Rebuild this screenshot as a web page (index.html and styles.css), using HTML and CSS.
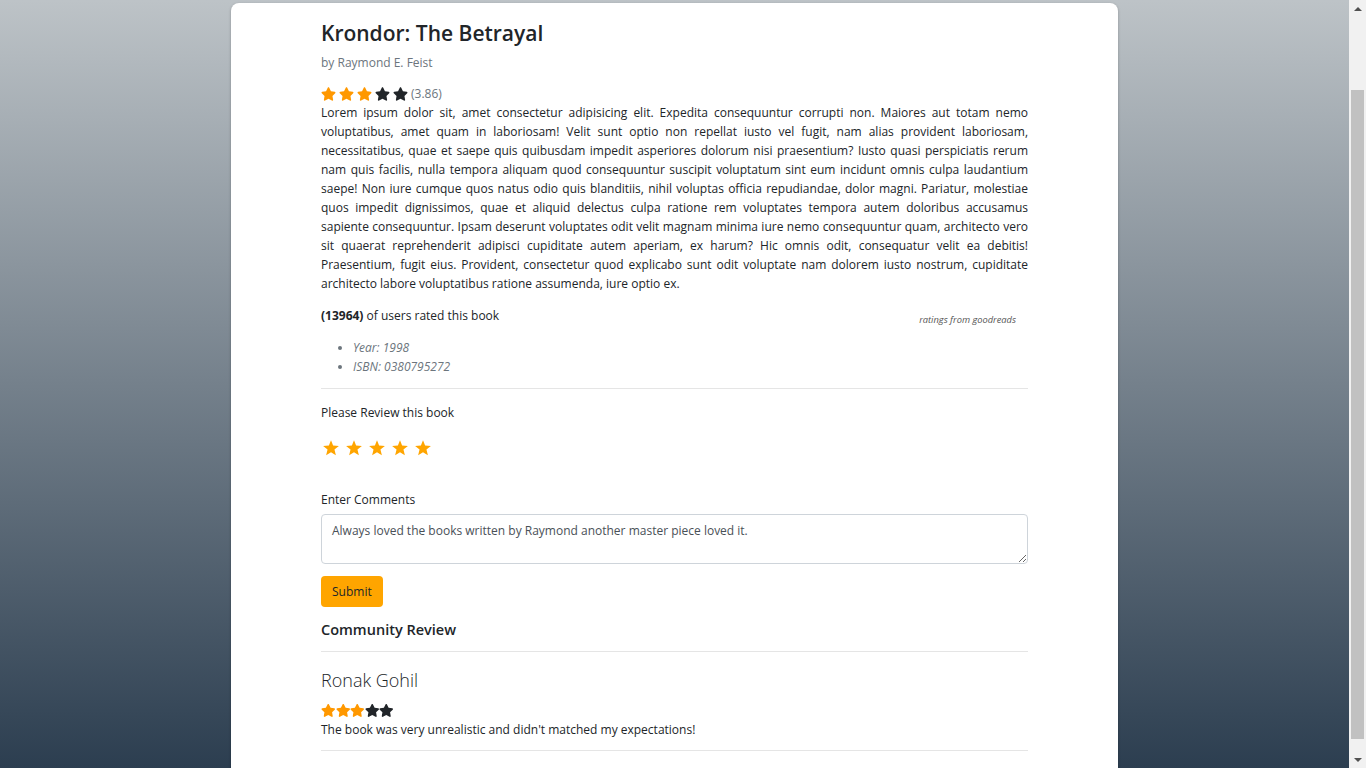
FILE: index.html
```html
<!DOCTYPE html>
<html lang="en">
<head>
<meta charset="utf-8">
<title>Krondor: The Betrayal</title>
<link rel="stylesheet" href="styles.css">
</head>
<body>
<svg class="sprite" aria-hidden="true">
  <symbol id="fa-star" viewBox="0 0 576 512"><path d="M259.3 17.8L194 150.2 47.9 171.5c-26.2 3.8-36.7 36.1-17.7 54.6l105.7 103-25 145.5c-4.5 26.3 23.2 46 46.4 33.7L288 439.6l130.7 68.7c23.2 12.2 50.9-7.4 46.4-33.7l-25-145.5 105.7-103c19-18.5 8.5-50.8-17.7-54.6L382 150.2 316.7 17.8c-11.7-23.6-45.6-23.9-57.4 0z"/></symbol>
  <symbol id="sharp-star" viewBox="0 0 24 24"><polygon points="12,1.5 14.8,8.7 22.5,9.2 16.6,14.1 18.5,21.8 12,17.6 5.5,21.8 7.4,14.1 1.5,9.2 9.2,8.7"/></symbol>
</svg>
<main class="page">
  <article class="book-card">
    <h1 class="book-title">Krondor: The Betrayal</h1>
    <p class="book-author">by Raymond E. Feist</p>
    <div class="rating-row">
      <span class="stars stars-md">
        <svg class="star on"><use href="#fa-star"/></svg><svg class="star on"><use href="#fa-star"/></svg><svg class="star on"><use href="#fa-star"/></svg><svg class="star"><use href="#fa-star"/></svg><svg class="star"><use href="#fa-star"/></svg>
      </span>
      <span class="rating-value">(3.86)</span>
    </div>
    <p class="book-desc">Lorem ipsum dolor sit, amet consectetur adipisicing elit. Expedita consequuntur corrupti non. Maiores aut totam nemo voluptatibus, amet quam in laboriosam! Velit sunt optio non repellat iusto vel fugit, nam alias provident laboriosam, necessitatibus, quae et saepe quis quibusdam impedit asperiores dolorum nisi praesentium? Iusto quasi perspiciatis rerum nam quis facilis, nulla tempora aliquam quod consequuntur suscipit voluptatum sint eum incidunt omnis culpa laudantium saepe! Non iure cumque quos natus odio quis blanditiis, nihil voluptas officia repudiandae, dolor magni. Pariatur, molestiae quos impedit dignissimos, quae et aliquid delectus culpa ratione rem voluptates tempora autem doloribus accusamus sapiente consequuntur. Ipsam deserunt voluptates odit velit magnam minima iure nemo consequuntur quam, architecto vero sit quaerat reprehenderit adipisci cupiditate autem aperiam, ex harum? Hic omnis odit, consequatur velit ea debitis! Praesentium, fugit eius. Provident, consectetur quod explicabo sunt odit voluptate nam dolorem iusto nostrum, cupiditate architecto labore voluptatibus ratione assumenda, iure optio ex.</p>
    <div class="rated-row">
      <p class="rated-count"><strong>(13964)</strong> of users rated this book</p>
      <span class="rated-source">ratings from goodreads</span>
    </div>
    <ul class="book-meta">
      <li>Year: 1998</li>
      <li>ISBN: 0380795272</li>
    </ul>
    <hr class="divider">
    <form class="review-form">
      <p class="form-label">Please Review this book</p>
      <div class="review-stars">
        <svg class="pick-star"><use href="#sharp-star"/></svg><svg class="pick-star"><use href="#sharp-star"/></svg><svg class="pick-star"><use href="#sharp-star"/></svg><svg class="pick-star"><use href="#sharp-star"/></svg><svg class="pick-star"><use href="#sharp-star"/></svg>
      </div>
      <label class="form-label" for="comments">Enter Comments</label>
      <textarea id="comments" class="form-textarea">Always loved the books written by Raymond another master piece loved it.</textarea>
      <button type="button" class="btn-submit">Submit</button>
    </form>
    <h2 class="section-title">Community Review</h2>
    <hr class="divider divider-tight">
    <div class="review">
      <h3 class="reviewer">Ronak Gohil</h3>
      <span class="stars stars-sm">
        <svg class="star on"><use href="#fa-star"/></svg><svg class="star on"><use href="#fa-star"/></svg><svg class="star on"><use href="#fa-star"/></svg><svg class="star"><use href="#fa-star"/></svg><svg class="star"><use href="#fa-star"/></svg>
      </span>
      <p class="review-text">The book was very unrealistic and didn't matched my expectations!</p>
    </div>
    <hr class="divider divider-end">
  </article>
</main>
<div class="scrollbar" aria-hidden="true">
  <span class="sb-arrow sb-up"></span>
  <span class="sb-track"><span class="sb-thumb"></span></span>
  <span class="sb-arrow sb-down"></span>
</div>
<script src="script.js"></script>
</body>
</html>
```

FILE: styles.css
```css
* { box-sizing: border-box; }

body {
  margin: 0;
  padding-right: 17px;
  min-height: 100vh;
  font-family: "Open Sans", "Noto Sans", "DejaVu Sans", sans-serif;
  font-size: 12px;
  line-height: 19px;
  color: #212529;
  background: linear-gradient(to bottom, #bdc3c7, #2c3e50) fixed;
}

.sprite { position: absolute; width: 0; height: 0; overflow: hidden; }

.page {
  display: flex;
  justify-content: center;
  padding: 89px 0 2px;
}

.book-card {
  width: 887px;
  background: #fff;
  border-radius: 8px;
  box-shadow: 0 1px 3px rgba(0, 0, 0, 0.25);
  padding: 18px 90px 30px;
}

.book-title {
  margin: 0 0 7px;
  font-size: 21px;
  line-height: 25px;
  font-weight: 600;
  color: #212529;
}

.book-author {
  margin: 0 0 12px;
  color: #6c757d;
}

.rating-row {
  display: flex;
  align-items: center;
  gap: 3px;
  height: 19px;
}

.stars { display: inline-flex; align-items: center; }
.star { fill: #212529; }
.star.on { fill: #ff9800; }

.stars-md { gap: 3px; }
.stars-md .star { width: 15px; height: 14px; }

.rating-value { color: #6c757d; }

.book-desc {
  margin: 0;
  text-align: justify;
}

.rated-row {
  display: flex;
  justify-content: space-between;
  align-items: flex-start;
  height: 19px;
  margin-top: 13px;
}

.rated-count { margin: 0; }

.rated-source {
  font-size: 9.3px;
  font-style: italic;
  color: #555;
  line-height: 10px;
  margin: 9px 12px 0 0;
}

.book-meta {
  margin: 13px 0 0;
  padding-left: 32px;
  font-style: italic;
  color: #6c757d;
}

.divider {
  border: 0;
  border-top: 1px solid #e5e5e5;
  margin: 12px 0 14px;
}

.review-form { display: flex; flex-direction: column; align-items: flex-start; }

.form-label { margin: 0; display: block; }

.review-stars {
  display: flex;
  gap: 5px;
  padding: 17px 0 0 1px;
  height: 68px;
}

.pick-star { width: 18px; height: 18px; fill: #ffa500; }

.form-textarea {
  width: 100%;
  height: 50px;
  margin-top: 5px;
  padding: 6px 10px;
  border: 1px solid #ced4da;
  border-radius: 4px;
  font: inherit;
  color: #495057;
  resize: vertical;
}

.btn-submit {
  margin-top: 12px;
  height: 31px;
  padding: 0 11px;
  border: 0;
  border-radius: 4px;
  background: #ffa500;
  color: #212529;
  font: inherit;
  cursor: pointer;
}

.section-title {
  margin: 13px 0 0;
  font-size: 14.5px;
  line-height: 19px;
  font-weight: 600;
}

.divider-tight { margin: 12px 0 17px; }

.review { display: flex; flex-direction: column; align-items: flex-start; }

.reviewer {
  margin: 0 0 11px;
  font-size: 18px;
  line-height: 22px;
  font-weight: 300;
}

.stars-sm { gap: 0; height: 16px; }
.stars-sm .star { width: 14.5px; height: 13px; }

.review-text { margin: 2px 0 0; }

.divider-end { margin: 11px 0 0; }

/* classic scrollbar look at the right edge of the window */
.scrollbar {
  position: fixed;
  top: 0;
  right: 0;
  width: 17px;
  height: 100vh;
  background: #f1f1f1;
  display: flex;
  flex-direction: column;
}

.sb-arrow {
  height: 17px;
  display: flex;
  align-items: center;
  justify-content: center;
}

.sb-arrow::before {
  content: "";
  border-left: 4px solid transparent;
  border-right: 4px solid transparent;
}

.sb-up::before { border-bottom: 4px solid #505050; }
.sb-down::before { border-top: 4px solid #505050; }

.sb-track {
  flex: 1;
  padding: 73px 2px 12px;
  display: flex;
}

.sb-thumb {
  flex: 1;
  background: #c1c1c1;
}
```

FILE: script.js
```js
window.scrollTo(0, 86);
window.addEventListener('load', function () { window.scrollTo(0, 86); });
```
